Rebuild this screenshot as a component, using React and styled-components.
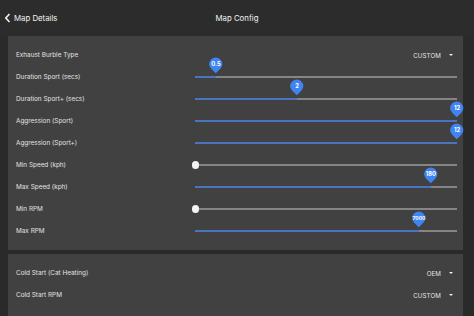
import React from 'react';
import styled, { createGlobalStyle } from 'styled-components';

const GlobalStyle = createGlobalStyle`
  html, body {
    margin: 0;
    padding: 0;
    background: #2a2a2a;
    font-family: Inter, "Liberation Sans", Arial, sans-serif;
    -webkit-font-smoothing: antialiased;
  }
`;

const Screen = styled.div`
  width: 474px;
  height: 316px;
  overflow: hidden;
  background: #2a2a2a;
  display: flex;
  flex-flow: column nowrap;
`;

const Header = styled.div`
  height: 38px;
  display: grid;
  grid-template-columns: 1fr auto 1fr;
  align-items: center;
  box-sizing: border-box;
  background: #2c2c2c;
  color: #f2f2f2;
  font-size: 7.8px;
`;

const Back = styled.div`
  display: flex;
  align-items: center;
  gap: 3px;
  padding-left: 4px;

  & svg {
    width: 7px;
    height: 10px;
  }
`;

const Title = styled.div``;

const Body = styled.div`
  display: flex;
  flex-flow: column nowrap;
  gap: 4px;
  padding: 0 11px 0 8px;
`;

const Panel = styled.div`
  background: #414141;
  padding: ${({ $top }) => $top}px 6px ${({ $bottom }) => $bottom}px 8px;
`;

const Row = styled.div`
  height: 22px;
  display: flex;
  align-items: center;
  justify-content: space-between;
`;

const Label = styled.div`
  color: #e2e2e2;
  font-size: 6.4px;
`;

const Dropdown = styled.div`
  display: flex;
  align-items: center;
  gap: 8px;
  color: #e4e4e4;
  font-size: 6.2px;
  letter-spacing: 0.1px;
  padding-right: 4px;
`;

const Caret = styled.span`
  width: 0;
  height: 0;
  border-left: 2.5px solid transparent;
  border-right: 2.5px solid transparent;
  border-top: 2.5px solid #f0f0f0;
`;

const Slider = styled.div`
  position: relative;
  width: 262px;
  height: 22px;
  display: flex;
  align-items: center;
`;

const Track = styled.div`
  position: relative;
  width: 100%;
  height: 2px;
  background: #858585;
`;

const Fill = styled.div`
  height: 100%;
  background: #4b74bf;
`;

const Pin = styled.div`
  position: absolute;
  top: -19px;
  width: 13.5px;
  height: 13.5px;
  margin-left: -6.75px;
  display: flex;
  align-items: center;
  justify-content: center;

  &::before {
    content: '';
    position: absolute;
    inset: 0;
    background: #3f84f2;
    border-radius: 50% 50% 0 50%;
    transform: rotate(45deg) scale(0.93);
  }

  & span {
    position: relative;
    color: #fff;
    font-size: ${({ $small }) => ($small ? 5 : 5.8)}px;
    font-weight: 700;
  }
`;

const Knob = styled.div`
  position: absolute;
  top: -3px;
  left: -3.5px;
  width: 7.5px;
  height: 7.5px;
  border-radius: 50%;
  background: #f4f4f4;
`;

const sliders = [
  { label: 'Duration Sport (secs)', value: '0.5', pct: 8 },
  { label: 'Duration Sport+ (secs)', value: '2', pct: 39 },
  { label: 'Aggression (Sport)', value: '12', pct: 100 },
  { label: 'Aggression (Sport+)', value: '12', pct: 100 },
  { label: 'Min Speed (kph)', value: null, pct: 0 },
  { label: 'Max Speed (kph)', value: '180', pct: 90 },
  { label: 'Min RPM', value: null, pct: 0 },
  { label: 'Max RPM', value: '7000', pct: 85.5 },
];

const SliderRow = ({ label, value, pct }) => (
  <Row>
    <Label>{label}</Label>
    <Slider>
      <Track>
        <Fill style={{ width: `${pct}%` }} />
        {value === null ? (
          <Knob />
        ) : (
          <Pin style={{ left: `${pct}%` }} $small={value.length > 3}>
            <span>{value}</span>
          </Pin>
        )}
      </Track>
    </Slider>
  </Row>
);

const SelectRow = ({ label, value }) => (
  <Row>
    <Label>{label}</Label>
    <Dropdown>
      {value}
      <Caret />
    </Dropdown>
  </Row>
);

const App = () => {
  return (
    <Screen>
      <GlobalStyle />
      <Header>
        <Back>
          <svg viewBox='0 0 7 10'>
            <path d='M5.5 1 L1.8 5 L5.5 9' fill='none' stroke='#f2f2f2' strokeWidth='1.6' />
          </svg>
          Map Details
        </Back>
        <Title>Map Config</Title>
        <div />
      </Header>
      <Body>
        <Panel $top={8} $bottom={8}>
          <SelectRow label='Exhaust Burble Type' value='CUSTOM' />
          {sliders.map((s) => (
            <SliderRow key={s.label} {...s} />
          ))}
        </Panel>
        <Panel $top={8} $bottom={10}>
          <SelectRow label='Cold Start (Cat Heating)' value='OEM' />
          <SelectRow label='Cold Start RPM' value='CUSTOM' />
        </Panel>
      </Body>
    </Screen>
  );
};

export default App;
